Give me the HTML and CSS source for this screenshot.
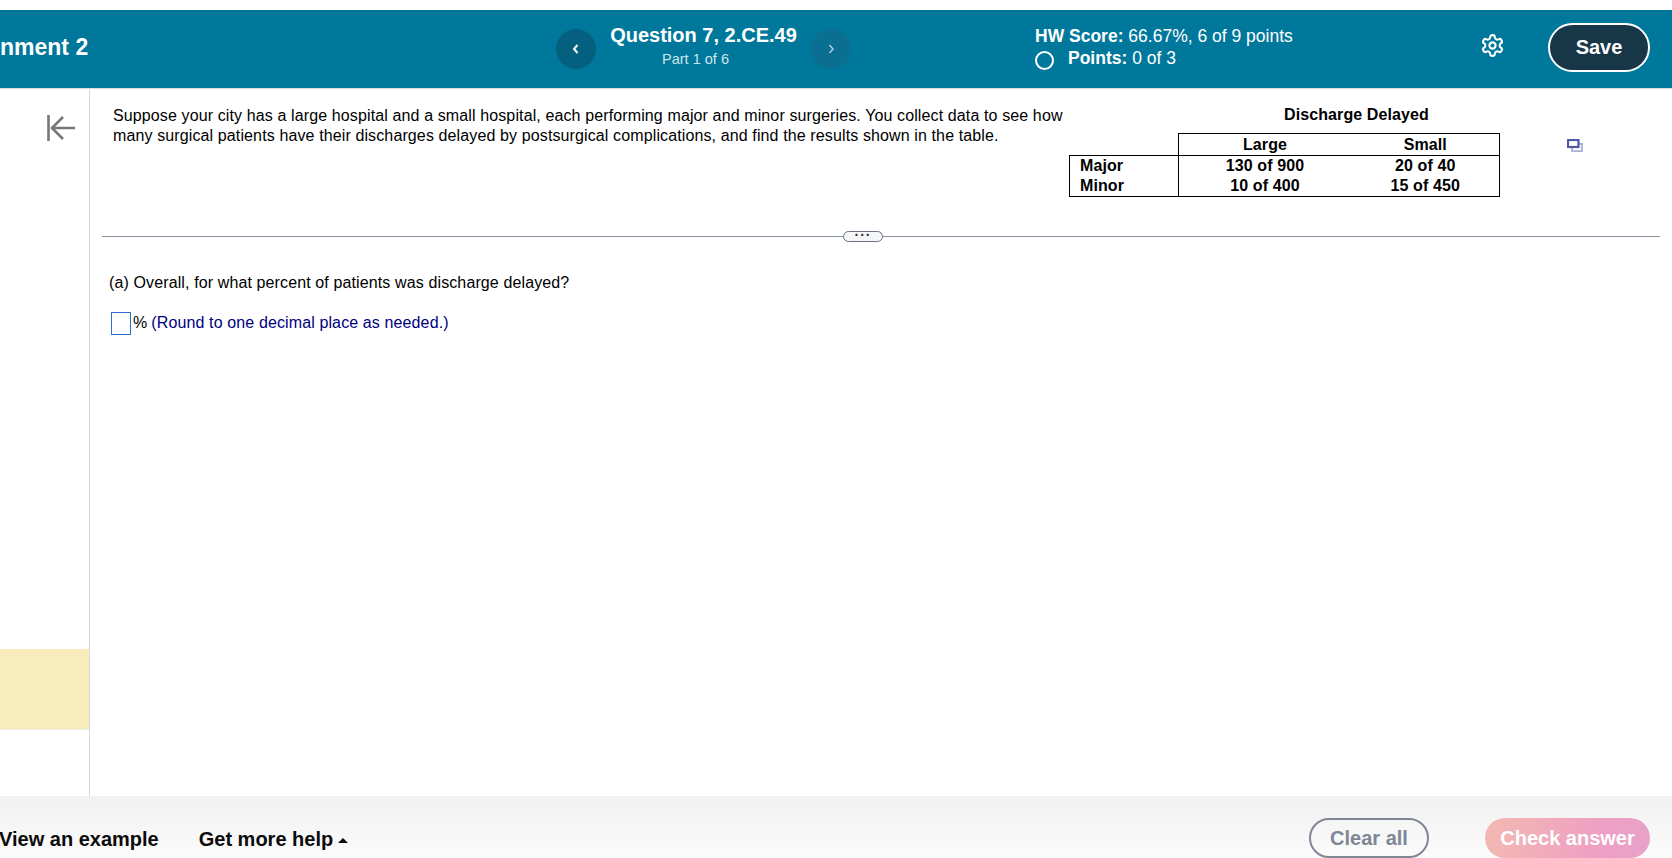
FILE: index.html
```html
<!DOCTYPE html>
<html lang="en">
<head>
<meta charset="utf-8">
<title>Question 7, 2.CE.49</title>
<link rel="stylesheet" href="styles.css">
</head>
<body>
<div class="app">
  <header class="topbar">
    <div class="assignment">nment 2</div>
    <button class="nav nav-prev" type="button"><svg width="10" height="14" viewBox="0 0 10 14"><path d="M6.500 3 3 7l3.500 4" fill="none" stroke="#fff" stroke-width="2"/></svg></button>
    <div class="question">
      <div class="question-title">Question 7, 2.CE.49</div>
      <div class="question-part">Part 1 of 6</div>
    </div>
    <button class="nav nav-next" type="button"><svg width="10" height="14" viewBox="0 0 10 14"><path d="M3.500 3 7 7l-3.500 4" fill="none" stroke="#a9cfdc" stroke-width="1.500"/></svg></button>
    <div class="score">
      <div class="score-line"><b>HW Score:</b> 66.67%, 6 of 9 points</div>
      <div class="score-line points"><span class="radio"></span><span><b>Points:</b> 0 of 3</span></div>
    </div>
    <svg class="gear" width="25" height="25" viewBox="0 0 24 24" fill="none" stroke="#fff" stroke-width="2" stroke-linejoin="round"><path d="M12.220 2h-.44a2 2 0 0 0-2 2v.18a2 2 0 0 1-1 1.730l-.43.25a2 2 0 0 1-2 0l-.15-.08a2 2 0 0 0-2.730.73l-.22.38a2 2 0 0 0 .73 2.730l.15.1a2 2 0 0 1 1 1.720v.51a2 2 0 0 1-1 1.740l-.15.09a2 2 0 0 0-.73 2.730l.22.38a2 2 0 0 0 2.730.73l.15-.08a2 2 0 0 1 2 0l.43.25a2 2 0 0 1 1 1.730V20a2 2 0 0 0 2 2h.44a2 2 0 0 0 2-2v-.18a2 2 0 0 1 1-1.730l.43-.25a2 2 0 0 1 2 0l.15.08a2 2 0 0 0 2.730-.73l.22-.39a2 2 0 0 0-.73-2.730l-.15-.08a2 2 0 0 1-1-1.740v-.5a2 2 0 0 1 1-1.740l.15-.09a2 2 0 0 0 .73-2.730l-.22-.38a2 2 0 0 0-2.730-.73l-.15.08a2 2 0 0 1-2 0l-.43-.25a2 2 0 0 1-1-1.730V4a2 2 0 0 0-2-2z"/><circle cx="12" cy="12" r="3"/></svg>
    <button class="save" type="button">Save</button>
  </header>
  <div class="main">
    <aside class="sidebar">
      <svg class="collapse" width="28" height="28" viewBox="0 0 28 28" fill="none" stroke="#777" stroke-width="2.600"><path d="M1.500 1v26M28 14H6M16 3 5 14l11 11"/></svg>
      <div class="note"></div>
    </aside>
    <section class="content">
      <div class="problem">
        <p class="statement">Suppose your city has a large hospital and a small hospital, each performing major and minor surgeries. You collect data to see how many surgical patients have their discharges delayed by postsurgical complications, and find the results shown in the table.</p>
        <div class="data">
          <div class="data-title">Discharge Delayed</div>
          <table class="data-table">
            <thead>
              <tr><th class="blank"></th><th class="col-large">Large</th><th class="col-small">Small</th></tr>
            </thead>
            <tbody>
              <tr><th class="row-head">Major</th><td>130 of 900</td><td>20 of 40</td></tr>
              <tr><th class="row-head">Minor</th><td>10 of 400</td><td>15 of 450</td></tr>
            </tbody>
          </table>
        </div>
        <svg class="popout" width="16" height="13" viewBox="0 0 16 13" fill="none"><path d="M5 5v7.200h10V5h-3" stroke="#aab0d8" stroke-width="1.800"/><rect x="1" y="1" width="10.500" height="7" stroke="#4f5aa5" stroke-width="2.200" fill="#fff"/></svg>
      </div>
      <div class="divider"><span class="divider-pill">&middot;&middot;&middot;</span></div>
      <div class="answer">
        <p class="prompt">(a) Overall, for what percent of patients was discharge delayed?</p>
        <p class="response"><span class="answer-box"></span><span class="percent">%</span><span class="hint">(Round to one decimal place as needed.)</span></p>
      </div>
    </section>
  </div>
  <footer class="footer">
    <a class="foot-link example">View an example</a>
    <a class="foot-link help">Get more help <span class="caret"></span></a>
    <button class="clear" type="button">Clear all</button>
    <button class="check" type="button">Check answer</button>
  </footer>
</div>
</body>
</html>
```
FILE: styles.css
```css
html, body {
  margin: 0;
  height: 858px;
  overflow: hidden;
  background: #fff;
  font-family: "Liberation Sans", Arial, sans-serif;
  color: #000;
}
button { font-family: inherit; padding: 0; cursor: pointer; }
p { margin: 0; }

.app {
  display: flex;
  flex-direction: column;
  height: 848px;
  padding-top: 10px;
  overflow: hidden;
}

/* Top bar */
.topbar {
  flex: none;
  height: 78px;
  display: flex;
  align-items: center;
  background: #00789c;
  border-bottom: 1px solid #d5dae2;
  color: #fff;
}
.assignment {
  width: 556px;
  flex: none;
  font-size: 23px;
  font-weight: 700;
  margin-top: -3px;
}
.nav {
  flex: none;
  width: 40px;
  height: 40px;
  border: 0;
  border-radius: 50%;
  display: flex;
  align-items: center;
  justify-content: center;
}
.nav-prev { background: #05607f; }
.nav-next { background: #0a6f90; }
.question {
  flex: none;
  width: 215px;
  text-align: center;
  margin-top: -8px;
}
.question-title {
  font-size: 20px;
  font-weight: 700;
  line-height: 26px;
}
.question-part {
  font-size: 14.500px;
  line-height: 20px;
  margin-top: 1px;
  padding-right: 16px;
  color: #cfe5ec;
}
.score {
  flex: none;
  width: 428px;
  margin-left: 184px;
  margin-top: -4px;
  font-size: 17.500px;
  line-height: 22px;
}
.score b { font-weight: 700; }
.points {
  display: flex;
  align-items: center;
  gap: 14px;
  margin-top: -1px;
}
.radio {
  width: 19px;
  height: 19px;
  box-sizing: border-box;
  border: 2px solid #fff;
  border-radius: 50%;
  margin-top: 5px;
}
.gear { flex: none; margin: -7px 0 0 17px; }
.save {
  flex: none;
  width: 102px;
  height: 49px;
  margin: -4px 0 0 43px;
  box-sizing: border-box;
  border: 2px solid #fff;
  border-radius: 25px;
  background: #173647;
  color: #fff;
  font-size: 20px;
  font-weight: 700;
}

/* Main */
.main {
  flex: 1;
  display: flex;
  min-height: 0;
}
.sidebar {
  flex: none;
  width: 89px;
  border-right: 1px solid #d5d8de;
  display: flex;
  flex-direction: column;
}
.collapse { margin: 25px 0 0 47px; flex: none; }
.note {
  flex: none;
  height: 80px;
  margin-top: 507px;
  background: #f8ebbc;
  border-bottom: 1px solid #ececec;
}
.content { flex: 1; min-width: 0; }
.problem {
  display: flex;
  height: 147px;
  box-sizing: border-box;
  padding: 17px 0 0 23px;
}
.statement {
  width: 955px;
  flex: none;
  font-size: 16px;
  line-height: 20px;
  letter-spacing: .12px;
}
.data {
  flex: none;
  width: 431px;
  margin: -1px 0 0 1px;
  font-size: 16px;
  font-weight: 700;
  letter-spacing: .1px;
}
.data-title {
  text-align: center;
  line-height: 20px;
  padding-left: 144px;
  margin-bottom: 8px;
  white-space: nowrap;
}
.data-table {
  border-collapse: collapse;
  line-height: 20px;
  table-layout: fixed;
  width: 431px;
  text-align: center;
}
.data-table th, .data-table td { padding: 0; font-weight: 700; }
.blank { width: 108px; }
.col-large, .col-small { border-top: 1px solid #000; border-bottom: 1px solid #000; height: 21px; }
.col-large { width: 173px; border-left: 1px solid #000; }
.col-small { border-right: 1px solid #000; }
.data-table tbody { border: 1px solid #000; }
.data-table .row-head { text-align: left; padding-left: 10px; border-right: 1px solid #000; }
.popout { flex: none; margin: 33px 0 0 67px; }

.divider {
  margin-left: 12px;
  margin-right: 12px;
  height: 1px;
  background: #8a92a0;
  display: flex;
  justify-content: center;
  align-items: center;
}
.divider-pill {
  box-sizing: border-box;
  width: 40px;
  height: 11px;
  border: 1px solid #6b7280;
  border-radius: 6px;
  background: #f4f6f8;
  color: #333;
  font-size: 14px;
  font-weight: 700;
  line-height: 7px;
  letter-spacing: 1px;
  text-align: center;
  margin-left: -36px;
}
.answer {
  padding: 36px 0 0 19px;
  font-size: 16px;
  letter-spacing: .12px;
}
.prompt { line-height: 20px; }
.response {
  display: flex;
  align-items: center;
  margin-top: 18px;
  padding-left: 2px;
  color: #000080;
  height: 24px;
  white-space: pre;
}
.answer-box {
  width: 20px;
  height: 23px;
  box-sizing: border-box;
  border: 1px solid #2f6fd0;
  margin-right: 2px;
}
.percent { color: #000; }
.hint { margin-left: 4px; }

/* Footer */
.footer {
  flex: none;
  height: 62px;
  display: flex;
  background: linear-gradient(#f1f1f1, #fbfbfb);
  font-size: 20px;
  font-weight: 700;
  overflow: hidden;
}
.foot-link { color: #0b0b0b; margin-top: 32px; line-height: 23px; white-space: nowrap; }
.example { margin-left: -1px; }
.help { margin-left: 40px; }
.caret {
  display: inline-block;
  width: 0;
  height: 0;
  margin: 0 0 3px -1px;
  border-left: 5px solid transparent;
  border-right: 5px solid transparent;
  border-bottom: 5px solid #0b0b0b;
}
.clear, .check {
  flex: none;
  height: 40px;
  margin-top: 22px;
  border-radius: 20px;
  font-size: 20px;
  font-weight: 700;
}
.clear {
  width: 120px;
  margin-left: auto;
  border: 2px solid #808696;
  background: transparent;
  color: #808696;
}
.check {
  width: 165px;
  margin-left: 56px;
  margin-right: 22px;
  border: 0;
  color: #fff;
  background: linear-gradient(100deg, #f3b9b1, #ee9fc4 70%, #e8a2c8);
}
```
